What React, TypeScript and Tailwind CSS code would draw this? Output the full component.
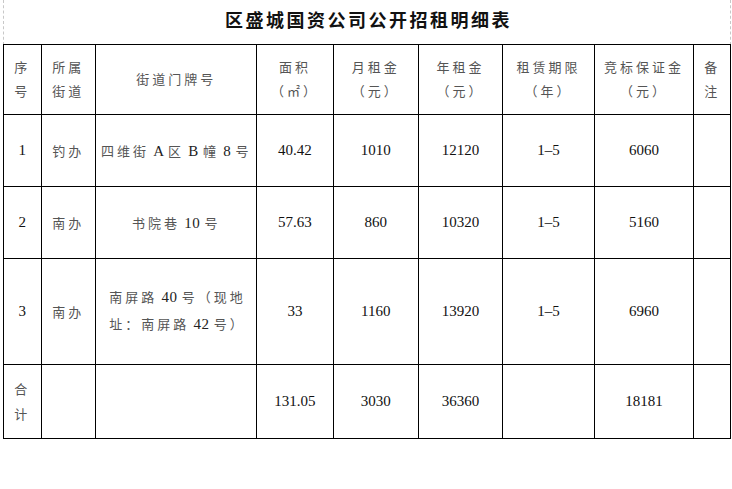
import React from 'react';

// 区盛城国资公司公开招租明细表

type Row = {
  no: string;
  street: string;
  address: string;
  area: string;
  monthly: string;
  yearly: string;
  term: string;
  deposit: string;
};

const rows: Row[] = [
  { no: '1', street: '钓办', address: '四维街 A 区 B 幢 8 号', area: '40.42', monthly: '1010', yearly: '12120', term: '1–5', deposit: '6060' },
  { no: '2', street: '南办', address: '书院巷 10 号', area: '57.63', monthly: '860', yearly: '10320', term: '1–5', deposit: '5160' },
];

const cell = 'border-[1.5px] border-black text-center align-middle p-0';
const cjk = 'text-[13px] tracking-[3px] text-[#555]';
const num = 'text-[15px] text-[#111]';

// latin/digit runs are set in the serif face, without the wide CJK tracking
function Mixed({ text }: { text: string }) {
  const parts = text.split(/([A-Za-z0-9 ]+)/).filter(Boolean);
  return (
    <>
      {parts.map((p, i) =>
        /^[A-Za-z0-9 ]+$/.test(p) ? (
          <span key={i} className="text-[15px] tracking-[0.5px] text-[#222]">{p}</span>
        ) : (
          <span key={i}>{p}</span>
        )
      )}
    </>
  );
}

function HeadCell({ lines }: { lines: string[] }) {
  return (
    <th className={`${cell} font-normal`}>
      <div className={`${cjk} leading-[24px] flex flex-col items-center`}>
        {lines.map((l, i) => (
          <span key={i}>{l}</span>
        ))}
      </div>
    </th>
  );
}

export default function App() {
  return (
    <div
      className="w-[732px] h-[489px] bg-white pl-[3px]"
      style={{ fontFamily: '"Liberation Serif", "Noto Sans CJK SC", serif' }}
    >
      <div className="w-[728px] h-[45px] border-x border-dashed border-[#c8c8c8] flex items-start justify-center pt-[6px]">
        <h1
          className="text-[18px] font-bold tracking-[2.5px] text-[#111] leading-[26px] pl-[3px]"
          style={{ fontFamily: '"Noto Sans CJK SC", sans-serif' }}
        >
          区盛城国资公司公开招租明细表
        </h1>
      </div>

      <table className="w-[728px] table-fixed border-collapse -mt-[1px]">
        <colgroup>
          <col className="w-[37.5px]" />
          <col className="w-[54.7px]" />
          <col className="w-[161px]" />
          <col className="w-[76.6px]" />
          <col className="w-[85px]" />
          <col className="w-[84.4px]" />
          <col className="w-[91.6px]" />
          <col className="w-[99.4px]" />
          <col className="w-[37.3px]" />
        </colgroup>
        <thead>
          <tr className="h-[70px]">
            <HeadCell lines={['序', '号']} />
            <HeadCell lines={['所属', '街道']} />
            <HeadCell lines={['街道门牌号']} />
            <HeadCell lines={['面积', '（㎡）']} />
            <HeadCell lines={['月租金', '（元）']} />
            <HeadCell lines={['年租金', '（元）']} />
            <HeadCell lines={['租赁期限', '（年）']} />
            <HeadCell lines={['竞标保证金', '（元）']} />
            <HeadCell lines={['备', '注']} />
          </tr>
        </thead>
        <tbody>
          {rows.map((r) => (
            <tr key={r.no} className="h-[72px]">
              <td className={`${cell} ${num}`}>{r.no}</td>
              <td className={cell}><span className={cjk}>{r.street}</span></td>
              <td className={cell}>
                <span className={`${cjk} whitespace-nowrap`}><Mixed text={r.address} /></span>
              </td>
              <td className={`${cell} ${num}`}>{r.area}</td>
              <td className={`${cell} ${num}`}>{r.monthly}</td>
              <td className={`${cell} ${num}`}>{r.yearly}</td>
              <td className={`${cell} ${num}`}>{r.term}</td>
              <td className={`${cell} ${num}`}>{r.deposit}</td>
              <td className={cell}></td>
            </tr>
          ))}
          <tr className="h-[106px]">
            <td className={`${cell} ${num}`}>3</td>
            <td className={cell}><span className={cjk}>南办</span></td>
            <td className={`${cell} text-left pl-[13px] pr-[6px]`}>
              <div className={`${cjk} leading-[27px] -mt-[2px]`}>
                <Mixed text="南屏路 40 号（现地址：南屏路 42 号）" />
              </div>
            </td>
            <td className={`${cell} ${num}`}>33</td>
            <td className={`${cell} ${num}`}>1160</td>
            <td className={`${cell} ${num}`}>13920</td>
            <td className={`${cell} ${num}`}>1–5</td>
            <td className={`${cell} ${num}`}>6960</td>
            <td className={cell}></td>
          </tr>
          <tr className="h-[74px]">
            <td className={cell}>
              <div className={`${cjk} leading-[25px] flex flex-col items-center`}>
                <span>合</span>
                <span>计</span>
              </div>
            </td>
            <td className={cell}></td>
            <td className={cell}></td>
            <td className={`${cell} ${num}`}>131.05</td>
            <td className={`${cell} ${num}`}>3030</td>
            <td className={`${cell} ${num}`}>36360</td>
            <td className={cell}></td>
            <td className={`${cell} ${num}`}>18181</td>
            <td className={cell}></td>
          </tr>
        </tbody>
      </table>
    </div>
  );
}
